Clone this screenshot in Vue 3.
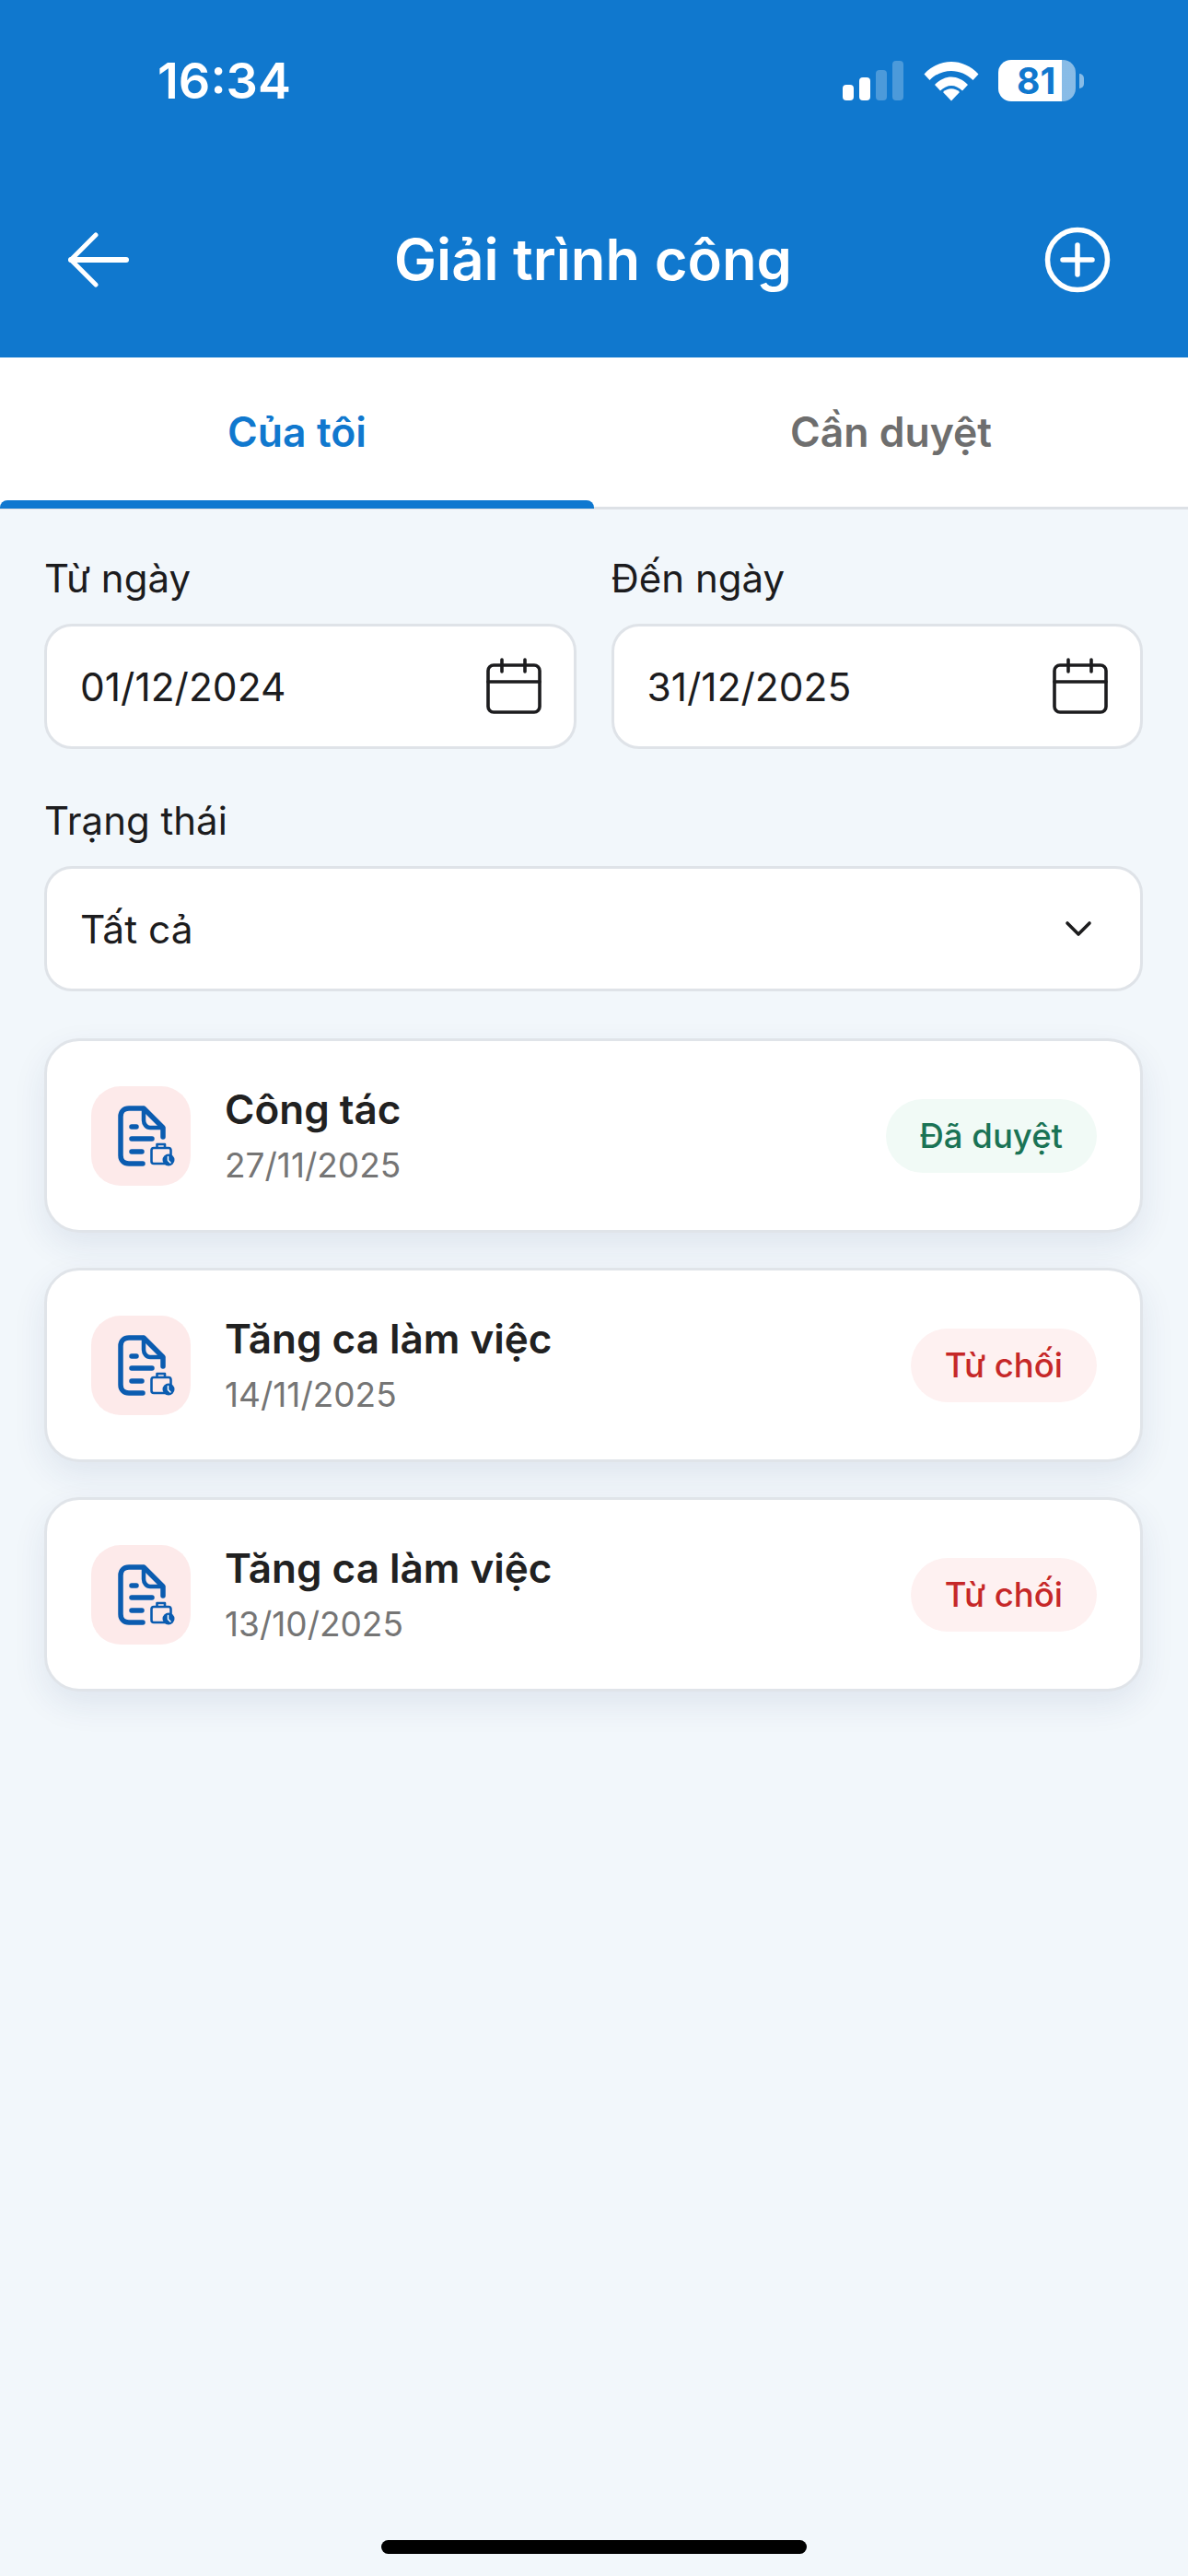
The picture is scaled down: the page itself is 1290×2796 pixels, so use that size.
<template>
  <div class="page">
    <header class="app-header">
      <div class="status-bar">
        <span class="time">16:34</span>
        <div class="status-icons">
          <svg class="signal" width="66" height="44" viewBox="0 0 66 44">
            <rect x="0" y="26" width="12" height="17" rx="4" fill="#fff" />
            <rect x="18" y="18" width="12" height="25" rx="4" fill="#fff" />
            <rect x="36" y="10" width="12" height="33" rx="4" fill="#fff" fill-opacity="0.25" />
            <rect x="54" y="0" width="12" height="43" rx="4" fill="#fff" fill-opacity="0.25" />
          </svg>
          <svg class="wifi" width="60" height="44" viewBox="0 0 60 44">
            <path d="M0.5 14.5C17 -3.5 43 -3.5 59.5 14.5L53.5 21C40.5 7.5 19.5 7.5 6.5 21Z" fill="#fff" />
            <path d="M12 26C23 14.5 37 14.5 48 26L42 32.5C34.5 25 25.5 25 18 32.5Z" fill="#fff" />
            <path d="M21 34C26 29 34 29 39 34L30 43.5Z" fill="#fff" />
          </svg>
          <div class="battery"><span>81</span></div>
          <span class="battery-nub"></span>
        </div>
      </div>
      <div class="nav-bar">
        <button class="nav-btn back">
          <svg width="66" height="60" viewBox="0 0 66 60" fill="none" stroke="#fff" stroke-linecap="round" stroke-linejoin="round">
            <path stroke-width="6" d="M63 30H3" />
            <path stroke-width="5" d="M30 3L3 30L30 57" />
          </svg>
        </button>
        <h1 class="nav-title">Giải trình công</h1>
        <button class="nav-btn plus">
          <svg width="72" height="72" viewBox="0 0 72 72" fill="none" stroke="#fff" stroke-width="5.5" stroke-linecap="round">
            <circle cx="36" cy="36" r="32.5" />
            <path d="M36 20V52M20 36H52" />
          </svg>
        </button>
      </div>
    </header>

    <nav class="tabs">
      <div class="tab active">Của tôi</div>
      <div class="tab">Cần duyệt</div>
    </nav>

    <section class="filters">
      <div class="date-row">
        <div v-for="d in dates" :key="d.label" class="field">
          <label class="field-label">{{ d.label }}</label>
          <div class="input">
            <span>{{ d.value }}</span>
            <svg width="62" height="62" viewBox="0 0 62 62" fill="none" stroke="#1c1c1e" stroke-width="3.6" stroke-linecap="round">
              <rect x="3" y="8" width="56" height="51" rx="6" />
              <path d="M3 26H59M18 2V15M43 2V15" />
            </svg>
          </div>
        </div>
      </div>
      <div class="field">
        <label class="field-label">Trạng thái</label>
        <div class="input">
          <span>Tất cả</span>
          <svg class="chevron" width="30" height="18" viewBox="0 0 30 18" fill="none" stroke="#1c1c1e" stroke-width="3.6" stroke-linecap="round" stroke-linejoin="round">
            <path d="M3 3L15 15L27 3" />
          </svg>
        </div>
      </div>
    </section>

    <section class="list">
      <article v-for="item in items" :key="item.date" class="card">
        <div class="card-icon">
          <svg width="108" height="108" viewBox="0 0 108 108" fill="none" stroke="#0b5cb0" stroke-linecap="round" stroke-linejoin="round">
            <path stroke-width="5.5" d="M56 84H41C35.5 84 32 80.5 32 75V33C32 27.5 35.5 24 41 24H57L78 45V55" />
            <path stroke-width="4.5" d="M57 24V37C57 41 60 45 64 45H78" />
            <path stroke-width="5.5" d="M44 44H49M44 57H66M44 71H55" />
            <rect x="65.5" y="67" width="21" height="17" rx="2.5" stroke-width="2.6" />
            <path stroke-width="2.6" d="M71.5 66V63H80V66" />
            <circle cx="84" cy="80" r="6.5" fill="#0b5cb0" stroke="none" />
            <path stroke="#fff" stroke-width="1.5" d="M83.5 76.5V80.5L86 83" />
          </svg>
        </div>
        <div class="card-body">
          <div class="card-title">{{ item.title }}</div>
          <div class="card-date">{{ item.date }}</div>
        </div>
        <span class="badge" :class="item.status">{{ item.label }}</span>
      </article>
    </section>

    <div class="home-indicator"></div>
  </div>
</template>

<script setup>
const dates = [
  { label: 'Từ ngày', value: '01/12/2024' },
  { label: 'Đến ngày', value: '31/12/2025' }
]

const items = [
  { title: 'Công tác', date: '27/11/2025', status: 'approved', label: 'Đã duyệt' },
  { title: 'Tăng ca làm việc', date: '14/11/2025', status: 'rejected', label: 'Từ chối' },
  { title: 'Tăng ca làm việc', date: '13/10/2025', status: 'rejected', label: 'Từ chối' }
]
</script>

<style>
body {
  margin: 0;
  background: #f2f7fb;
}
</style>

<style scoped>
.page {
  width: 1290px;
  height: 2796px;
  display: flex;
  flex-direction: column;
  background: #f2f7fb;
  font-family: Inter, "Noto Sans", sans-serif;
  color: #1c1c1e;
  overflow: hidden;
}
.app-header {
  background: #1078ce;
  color: #fff;
}
.status-bar {
  height: 175px;
  display: flex;
  align-items: center;
  justify-content: space-between;
  padding: 0 113px 0 171px;
}
.time {
  font-size: 54px;
  font-weight: 600;
}
.status-icons {
  display: flex;
  align-items: center;
}
.signal {
  margin-right: 22px;
}
.wifi {
  margin-right: 21px;
}
.battery {
  width: 84px;
  height: 45px;
  border-radius: 14px;
  background: linear-gradient(90deg, #fff 82%, rgba(255, 255, 255, 0.5) 82%);
  color: #1078ce;
  font-size: 39px;
  font-weight: 700;
  line-height: 45px;
  padding-left: 20px;
  box-sizing: border-box;
}
.battery-nub {
  width: 5px;
  height: 16px;
  margin-left: 4px;
  border-radius: 0 6px 6px 0;
  background: rgba(255, 255, 255, 0.5);
}
.nav-bar {
  height: 213px;
  display: grid;
  grid-template-columns: 1fr auto 1fr;
  align-items: center;
  padding: 0 84px 0 82px;
}
.nav-btn {
  border: 0;
  padding: 0;
  background: none;
  display: flex;
}
.nav-btn.back {
  margin-left: -8px;
}
.nav-btn.plus {
  justify-self: end;
}
.nav-title {
  margin: 0;
  font-size: 61.5px;
  font-weight: 600;
}
.tabs {
  height: 165px;
  box-sizing: border-box;
  display: flex;
  background: #fff;
  border-bottom: 3px solid #dde1e6;
}
.tab {
  flex: 1;
  position: relative;
  display: flex;
  align-items: center;
  justify-content: center;
  font-size: 44.5px;
  font-weight: 600;
  color: #6e6e6e;
}
.tab.active {
  color: #1078ce;
}
.tab.active::after {
  content: "";
  position: absolute;
  left: 0;
  right: 0;
  bottom: -2px;
  height: 9px;
  border-radius: 8px 8px 0 0;
  background: #0f78d0;
}
.filters {
  padding: 49px 49px 0 48px;
  display: flex;
  flex-direction: column;
  gap: 52px;
}
.date-row {
  display: grid;
  grid-template-columns: 1fr 1fr;
  gap: 38px;
}
.field-label {
  display: block;
  font-size: 42px;
  line-height: 52px;
  margin-bottom: 23px;
}
.input {
  height: 136px;
  box-sizing: border-box;
  background: #fff;
  border: 3px solid #dfe3e8;
  border-radius: 30px;
  padding: 0 34px 0 36px;
  display: flex;
  align-items: center;
  justify-content: space-between;
  font-size: 42.5px;
}
.chevron {
  margin-right: 18px;
}
.list {
  padding: 51px 49px 0 48px;
  display: flex;
  flex-direction: column;
  gap: 38px;
}
.card {
  height: 211px;
  box-sizing: border-box;
  background: #fff;
  border: 3px solid #e0e4e9;
  border-radius: 38px;
  box-shadow: 0 14px 36px rgba(30, 60, 110, 0.09);
  padding: 0 47px 0 48px;
  display: flex;
  align-items: center;
}
.card-icon {
  width: 108px;
  height: 108px;
  border-radius: 32px;
  background: #fdeaea;
  display: flex;
  flex-shrink: 0;
}
.card-body {
  flex: 1;
  margin-left: 37px;
}
.card-title {
  font-size: 44px;
  font-weight: 600;
  line-height: 56px;
  color: #212121;
}
.card-date {
  font-size: 37px;
  line-height: 48px;
  margin-top: 9px;
  color: #757575;
}
.badge {
  height: 80px;
  line-height: 80px;
  padding: 0 37px;
  border-radius: 40px;
  font-size: 36.5px;
  font-weight: 500;
}
.badge.approved {
  background: #f1faf6;
  color: #1a7355;
}
.badge.rejected {
  background: #fef1f1;
  color: #c62828;
}
.home-indicator {
  width: 462px;
  height: 15px;
  border-radius: 8px;
  background: #000;
  margin: auto auto 24px;
}
</style>
